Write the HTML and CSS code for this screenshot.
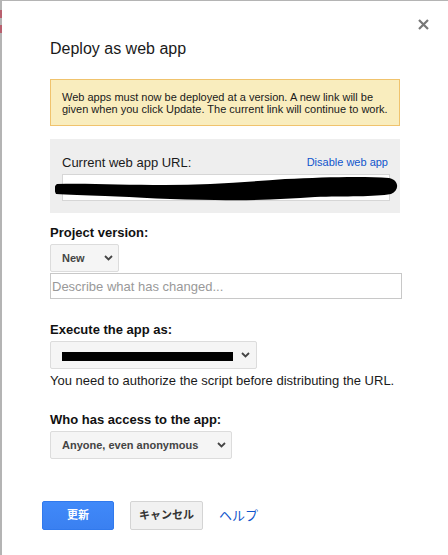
FILE: index.html
```html
<!DOCTYPE html>
<html lang="en">
<head>
<meta charset="utf-8">
<title>Deploy as web app</title>
<link rel="stylesheet" href="styles.css">
</head>
<body>
<div class="frame">
  <span class="edge-mark edge-mark-a"></span>
  <span class="edge-mark edge-mark-b"></span>
  <div class="dialog">
    <button class="close" aria-label="Close">
      <svg width="11" height="11" viewBox="0 0 11 11"><path d="M1 1L10 10M10 1L1 10" stroke="#777" stroke-width="2.2" fill="none"/></svg>
    </button>
    <h1 class="title">Deploy as web app</h1>
    <div class="notice">Web apps must now be deployed at a version. A new link will be given when you click Update. The current link will continue to work.</div>
    <div class="url-box">
      <div class="url-head">
        <span class="url-label">Current web app URL:</span>
        <a class="link small-link" href="#">Disable web app</a>
      </div>
      <div class="url-field">
        <input class="url-input" type="text" value="">
        <svg class="scribble" width="344" height="26" viewBox="0 0 344 26"><path d="M2 8 C 30 7 70 9 110 9 C 150 9 190 6 230 3 C 270 1 310 0 334 2 C 344 4 345 14 336 18 C 320 21 290 20 260 21 C 230 23 200 25 160 24 C 120 24 80 21 50 20 C 30 19 12 19 1 18 C -1 14 -1 10 2 8 Z" fill="#000"/></svg>
      </div>
    </div>

    <div class="field field-first">
      <div class="label">Project version:</div>
      <div class="select select-new"><span class="select-text">New</span><svg class="chev" width="9" height="6" viewBox="0 0 9 6"><path d="M1 1L4.5 4.5L8 1" stroke="#444" stroke-width="1.8" fill="none"/></svg></div>
      <input class="text-input" type="text" placeholder="Describe what has changed...">
    </div>

    <div class="field">
      <div class="label">Execute the app as:</div>
      <div class="select select-exec"><span class="redacted"></span><svg class="chev" width="9" height="6" viewBox="0 0 9 6"><path d="M1 1L4.5 4.5L8 1" stroke="#444" stroke-width="1.8" fill="none"/></svg></div>
      <p class="hint">You need to authorize the script before distributing the URL.</p>
    </div>

    <div class="field">
      <div class="label">Who has access to the app:</div>
      <div class="select select-access"><span class="select-text">Anyone, even anonymous</span><svg class="chev" width="9" height="6" viewBox="0 0 9 6"><path d="M1 1L4.5 4.5L8 1" stroke="#444" stroke-width="1.8" fill="none"/></svg></div>
    </div>
  </div>
  <div class="footer">
    <button class="btn btn-primary">更新</button>
    <button class="btn btn-default">キャンセル</button>
    <a class="link help-link" href="#">ヘルプ</a>
  </div>
</div>
</body>
</html>
```
FILE: styles.css
```css
* { box-sizing: border-box; }
html, body { margin: 0; padding: 0; background: #fff; }
body {
  font-family: "Liberation Sans", Arial, "Noto Sans CJK JP", sans-serif;
  color: #1a1a1a;
  width: 448px;
  height: 555px;
  overflow: hidden;
}
.frame {
  position: relative;
  height: 555px;
  border-left: 2px solid #b4b4b4;
  border-top: 1px solid #b4b4b4;
  display: flex;
  flex-direction: column;
}
.edge-mark {
  position: absolute;
  left: -2px;
  width: 2px;
  background: #b8606e;
}
.edge-mark-a { top: 9px; height: 8px; }
.edge-mark-b { top: 24px; height: 8px; }
.dialog {
  position: relative;
  padding: 38px 46px 0 48px;
}
.close {
  position: absolute;
  top: 18px;
  right: 19px;
  width: 11px;
  height: 11px;
  padding: 0;
  border: 0;
  background: none;
  display: block;
}
.close svg { display: block; }
.title {
  margin: 0;
  font-size: 16px;
  line-height: 20px;
  font-weight: normal;
  color: #1a1a1a;
}
.notice {
  margin-top: 20px;
  width: 350px;
  background: #f9edbe;
  border: 1px solid #f0c36d;
  padding: 11px 11px 10px;
  font-size: 11px;
  line-height: 12px;
  color: #1a1a1a;
}
.url-box {
  margin-top: 13px;
  width: 350px;
  background: #eeeeee;
  padding: 16px 10px 12px 12px;
}
.url-head {
  display: flex;
  justify-content: space-between;
  align-items: flex-start;
  font-size: 13px;
  line-height: 16px;
}
.link { color: #15c; text-decoration: none; }
.small-link {
  font-size: 11px;
  line-height: 14px;
  margin-right: 2px;
}
.url-field {
  position: relative;
  margin-top: 3px;
}
.url-input {
  display: block;
  width: 328px;
  height: 27px;
  border: 1px solid #d6d6d6;
  background: #fff;
  margin: 0;
  padding: 0 2px;
  font: 13px "Liberation Sans", Arial, sans-serif;
}
.scribble {
  position: absolute;
  left: -7px;
  top: 2px;
}
.field { margin-top: 23px; }
.field-first { margin-top: 12px; }
.label {
  font-size: 13px;
  line-height: 16px;
  font-weight: bold;
  color: #111;
  margin-bottom: 3px;
}
.select {
  display: flex;
  align-items: center;
  justify-content: space-between;
  height: 28px;
  background: #f5f5f5;
  border: 1px solid #dcdcdc;
  border-radius: 2px;
  padding: 0 5px 0 11px;
  font-size: 11px;
  font-weight: bold;
  color: #444;
}
.select-new { width: 69px; }
.select-exec { width: 207px; padding-right: 6px; }
.select-access { width: 182px; height: 28px; }
.chev { display: block; flex: none; }
.redacted {
  display: block;
  width: 171px;
  height: 9px;
  margin-top: 2px;
  background: #000;
}
.text-input {
  display: block;
  margin: 1px 0 0;
  width: 352px;
  height: 26px;
  border: 1px solid #c8c8c8;
  padding: 0 1px;
  font: 13px "Liberation Sans", Arial, sans-serif;
  color: #222;
  outline: none;
}
.text-input::placeholder { color: #999; }
.hint {
  margin: 4px 0 0;
  font-size: 13px;
  line-height: 16px;
  color: #1a1a1a;
}
.footer {
  margin-top: 42px;
  padding-left: 40px;
  display: flex;
  align-items: center;
  gap: 16px;
}
.btn {
  height: 29px;
  min-width: 72px;
  padding: 0 8px;
  border-radius: 2px;
  font-family: "Liberation Sans", Arial, "Noto Sans CJK JP", sans-serif;
  font-size: 11px;
  font-weight: bold;
  line-height: 27px;
  text-align: center;
}
.btn-primary {
  width: 72px;
  color: #fff;
  background: linear-gradient(#4089f9, #3a80f1);
  border: 1px solid #3079ed;
}
.btn-default {
  width: 73px;
  color: #333;
  background: #f1f1f1;
  border: 1px solid #d4d4d4;
}
.help-link {
  font-size: 13px;
  line-height: 16px;
  margin-left: 0;
}
```
